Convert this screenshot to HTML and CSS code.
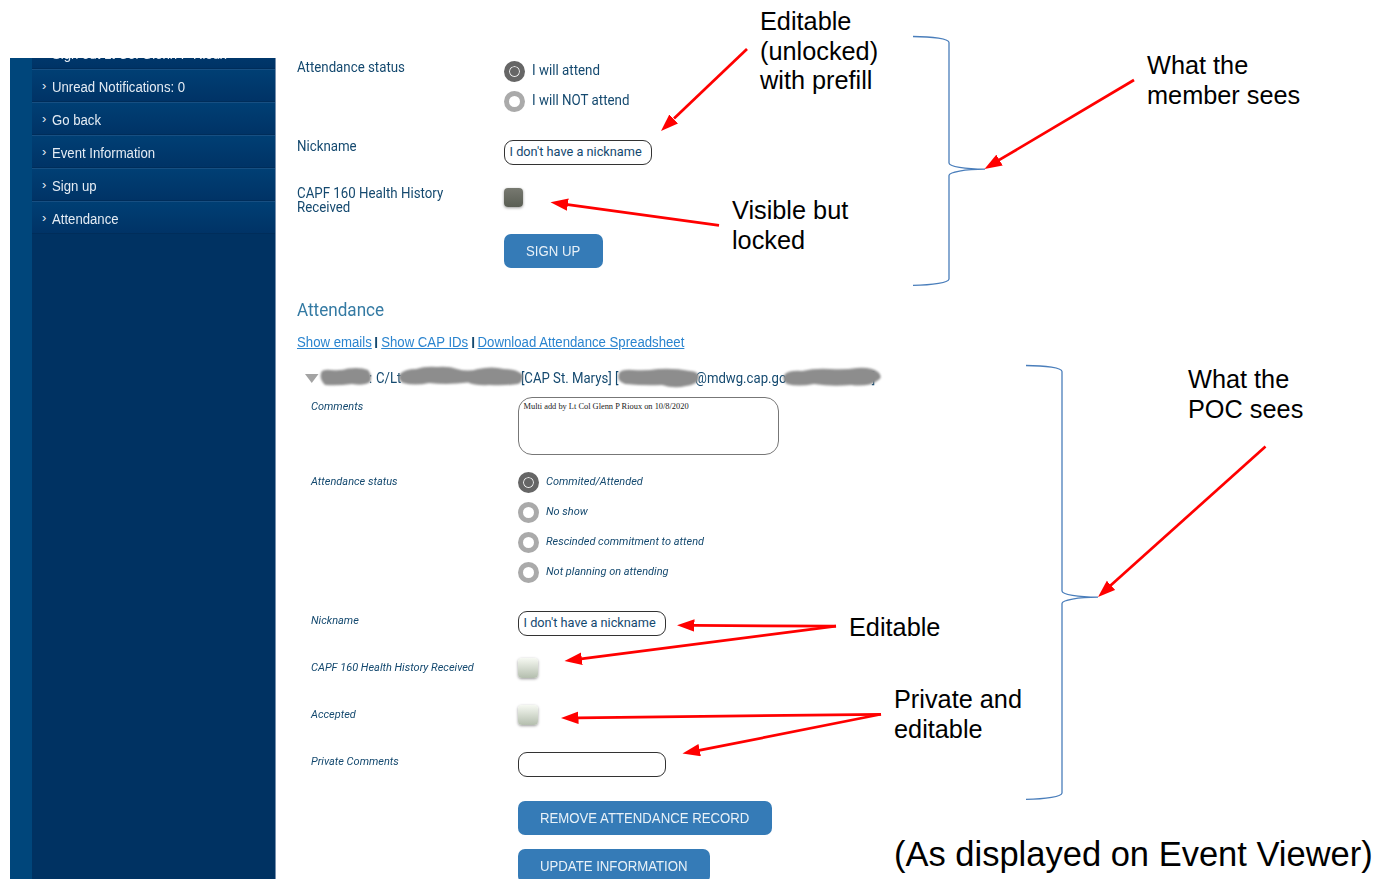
FILE: index.html
```html
<!DOCTYPE html>
<html lang="en">
<head>
<meta charset="utf-8">
<title>Event Viewer</title>
<link rel="stylesheet" href="styles.css">
</head>
<body>
<div class="slide">
  <div class="app">
    <aside class="sidebar">
      <nav class="nav">
        <a class="nav-item"><span class="chev">›</span><span class="nav-text">Sign out Lt Col Glenn P Rioux</span></a>
        <a class="nav-item"><span class="chev">›</span><span class="nav-text">Unread Notifications: 0</span></a>
        <a class="nav-item"><span class="chev">›</span><span class="nav-text">Go back</span></a>
        <a class="nav-item"><span class="chev">›</span><span class="nav-text">Event Information</span></a>
        <a class="nav-item"><span class="chev">›</span><span class="nav-text">Sign up</span></a>
        <a class="nav-item"><span class="chev">›</span><span class="nav-text">Attendance</span></a>
      </nav>
    </aside>
    <main class="main">
      <section class="signup">
        <div class="row tall"><div class="label">Attendance status</div>
          <div class="radios">
            <div class="option"><span class="radio on"></span><span class="otext">I will attend</span></div>
            <div class="option"><span class="radio"></span><span class="otext">I will NOT attend</span></div>
          </div>
        </div>
        <div class="row"><div class="label">Nickname</div><div class="field">I don't have a nickname</div></div>
        <div class="row"><div class="label">CAPF 160 Health History<br>Received</div><div class="check locked"></div></div>
        <div class="actions"><div class="button signup-btn"><span class="btext">SIGN UP</span></div></div>
      </section>
      <h2 class="heading">Attendance</h2>
      <div class="links"><a>Show emails</a><i class="bar"></i><a>Show CAP IDs</a><i class="bar"></i><a>Download Attendance Spreadsheet</a></div>
      <div class="member">
        <svg class="tri" width="14" height="9" viewBox="0 0 14 9"><path d="M0 0H13.500L6.750 9Z" fill="#a3a3a3"/></svg>
        <div class="mtext"><span class="m0">:</span><span class="m1">C/Lt</span><span class="m2">[CAP St. Marys] [</span><span class="m3">@mdwg.cap.go</span><span>]</span></div>
      </div>
      <section class="record">
        <div class="row comments"><div class="label">Comments</div><div class="area">Multi add by Lt Col Glenn P Rioux on 10/8/2020</div></div>
        <div class="row status"><div class="label">Attendance status</div>
          <div class="radios">
            <div class="option"><span class="radio on"></span><span class="otext">Commited/Attended</span></div>
            <div class="option"><span class="radio"></span><span class="otext">No show</span></div>
            <div class="option"><span class="radio"></span><span class="otext">Rescinded commitment to attend</span></div>
            <div class="option"><span class="radio"></span><span class="otext">Not planning on attending</span></div>
          </div>
        </div>
        <div class="row"><div class="label">Nickname</div><div class="field">I don't have a nickname</div></div>
        <div class="row"><div class="label">CAPF 160 Health History Received</div><div class="check"></div></div>
        <div class="row"><div class="label">Accepted</div><div class="check"></div></div>
        <div class="row last"><div class="label">Private Comments</div><div class="field"></div></div>
        <div class="actions"><div class="button remove-btn"><span class="btext">REMOVE ATTENDANCE RECORD</span></div><div class="button update-btn"><span class="btext">UPDATE INFORMATION</span></div></div>
      </section>
    </main>
  </div>

  <svg class="marks" width="1386" height="891" viewBox="0 0 1386 891">
    <defs>
      <marker id="head" markerUnits="userSpaceOnUse" markerWidth="18" markerHeight="13" refX="17.5" refY="6.25" orient="auto"><path d="M0 0L17.5 6.25L0 12.5Z" fill="#f00"/></marker>
      <filter id="soft"><feGaussianBlur stdDeviation="0.9"/></filter>
    </defs>
    <g fill="#8d8d8d" filter="url(#soft)">
      <path d="M321 373Q322 369 331 370Q342 371 348 368.500Q361 367 368 370Q373 376 370 382Q364 386 352 384Q338 386 325 385Q319 379 321 373Z"/>
      <path d="M400 374Q405 369 416 369Q425 366 437 367Q449 366 457 369Q468 372 478 369Q492 366 504 369Q517 369 523 375Q523 382 518 384Q504 386 489 385Q476 386 468 382.500Q448 385 429 383Q415 386 403 383Q397 379 400 374Z"/>
      <path d="M619 373Q622 369 633 370Q646 371 658 369Q675 368 690 371Q698 371 699 377Q698 385 686 386Q674 389 662 385Q645 386 625 384Q616 381 619 373Z"/>
      <path d="M785 374Q790 370 802 371Q815 368 830 369Q845 370 857 368Q871 367 878 372Q884 377 877 381Q869 387 851 385Q832 387 814 384Q798 387 787 384Q781 379 785 374Z"/>
    </g>
    <g fill="none" stroke="#4a7ebb" stroke-width="1.3">
      <path d="M913 36.500C933 36.500 949 39 949 42.500V163C949 166.500 965 169.200 985 169.200C965 169.200 949 172 949 175.500V279C949 282.500 933 285.300 913 285.300"/>
      <path d="M1026 365.500C1046 365.500 1062 368 1062 371.500V591C1062 594.500 1078 597.200 1098 597.200C1078 597.200 1062 600 1062 603.500V793C1062 796.500 1046 799.300 1026 799.300"/>
    </g>
    <g stroke="#f00" stroke-width="2.700">
      <path d="M747 49L674 118.500"/><path d="M719 225.300L566 204.400"/>
      <path d="M1134 80L998 160.700"/><path d="M1265.500 446.500L1110 586"/>
      <path d="M836 626.200L694 625.400"/><path d="M836 626.200L581 658.900"/>
      <path d="M881 714.300L578 717.800"/><path d="M881 714.300L699 750.400"/>
    </g>
    <g fill="none" stroke="none">
      <path d="M747 49L661 131" marker-end="url(#head)"/><path d="M719 225.300L550.500 202.300" marker-end="url(#head)"/>
      <path d="M1134 80L984.500 169" marker-end="url(#head)"/><path d="M1265.500 446.500L1098 597" marker-end="url(#head)"/>
      <path d="M836 626.200L677 625.300" marker-end="url(#head)"/><path d="M836 626.200L564.500 661" marker-end="url(#head)"/>
      <path d="M881 714.300L561 718" marker-end="url(#head)"/><path d="M881 714.300L682.500 753.600" marker-end="url(#head)"/>
    </g>
  </svg>
  <p class="note n1">Editable<br>(unlocked)<br>with prefill</p>
  <p class="note n2">Visible but<br>locked</p>
  <p class="note n3">What the<br>member sees</p>
  <p class="note n4">What the<br>POC sees</p>
  <p class="note n5">Editable</p>
  <p class="note n6">Private and<br>editable</p>
  <p class="note n7">(As displayed on Event Viewer)</p>
</div>
</body>
</html>
```
FILE: styles.css
```css
* { box-sizing: border-box; }
body { margin: 0; background: #fff; }
.slide { position: relative; width: 1386px; height: 891px; overflow: hidden; padding: 58px 0 0 10px; font-family: "Liberation Sans", Arial, sans-serif; }
.app { display: flex; width: 900px; height: 821px; overflow: hidden; }
.sidebar { width: 266px; flex: none; padding-left: 22px; background: #00467b; border-right: 1px solid #7890ae; overflow: hidden; }
.nav { height: 843px; margin-top: -22px; background: #003262; }
.nav-item { display: flex; height: 33px; padding: 1px 0 0 10px; line-height: 32px; font-size: 14px; color: #e4ecf4; white-space: nowrap; background: linear-gradient(#003f74, #003366); border-top: 1px solid #174f82; border-bottom: 1px solid #002d5a; }
.nav-text, .label, .otext, .btext, .links, .mtext, .heading { transform-origin: 0 50%; }
.nav-text { transform: scaleX(.94); }
.chev { width: 10.300px; line-height: 30px; font-size: 13px; }
.main { flex: 1; padding: 3px 0 0 21px; font-family: Roboto, sans-serif; color: #14496f; }
.row { display: grid; grid-template-columns: 207px 1fr; height: 47px; align-items: start; justify-items: start; }
.row.tall { height: 79px; }
.label { font-size: 14px; line-height: 14px; white-space: nowrap; transform: scaleX(.949); }
.signup .label { margin-top: -1px; }
.option { display: flex; align-items: center; height: 30px; gap: 7px; font-size: 14px; line-height: 19px; white-space: nowrap; }
.otext { transform: scaleX(.953); margin-top: -2px; }
.radios { margin-top: -5px; }
.radio { width: 21px; height: 21px; border: 5px solid #aaa; border-radius: 50%; background: #fff; margin-top: 1px; }
.radio.on { border-color: #666; background: #666; box-shadow: inset 0 0 0 1px #eee; }
.field { width: 148px; height: 25px; border: 1px solid #333; border-radius: 9px; padding-left: 4.500px; font-size: 12.750px; line-height: 22px; white-space: nowrap; }
.check { width: 20px; height: 20px; border-radius: 4px; background: linear-gradient(#f6f9f2, #b4beae); box-shadow: 0 1px 3px #0006; }
.check.locked { width: 19px; height: 19px; margin-top: 1px; background: linear-gradient(#777970, #5a5e54); }
.actions { display: flex; flex-direction: column; align-items: flex-start; gap: 14px; padding-left: 207px; }
.button { height: 34px; padding-left: 22px; border-radius: 7px; background: #357bb7; color: #e8f1f8; font: 14px/35px "Liberation Sans", Arial, sans-serif; white-space: nowrap; }
.btext { display: inline-block; transform: scaleX(.942); }
.signup-btn { width: 99px; }
.remove-btn { width: 254px; }
.update-btn { width: 192px; }
.heading { margin: 30px 0 0; font-size: 18px; line-height: 24px; font-weight: 400; color: #347aa3; transform: scaleX(.95); }
.links { display: flex; margin-top: 12px; font: 14px/16px "Liberation Sans", Arial, sans-serif; color: #2a84cf; white-space: nowrap; transform: scaleX(.942); }
.links a { text-decoration: underline; }
.bar { width: 2px; height: 11px; margin: 3px 4px; background: #14496f; }
.links { height: 16px; }
.member { display: flex; margin: 19px 0 0 8px; height: 18px; line-height: 18px; font-size: 14px; white-space: nowrap; }
.tri { flex: none; margin-top: 5px; margin-right: 50px; }
.mtext { display: flex; transform: scaleX(.94); }
.m0 { width: 7.400px; }
.m1 { width: 154.200px; }
.m2 { width: 185.300px; }
.m3 { width: 188px; }
.record { padding: 10px 0 0 14px; }
.record .row.comments { height: 75px; }
.record .row.status { height: 139px; }
.record .row.last { height: 49px; }
.record .label, .record .otext { font-size: 11.500px; font-style: italic; line-height: 18px; transform: scaleX(.955); }
.record .otext { margin-top: -2px; }
.area { width: 261px; height: 58px; border: 1px solid #777; border-radius: 14px; padding: 3px 4.500px; font: 8.400px/12px "Liberation Serif", serif; color: #222; white-space: nowrap; }
.marks { position: absolute; left: 0; top: 0; }
.note { position: absolute; margin: 0; font-size: 25.300px; line-height: 29.700px; color: #000; white-space: nowrap; }
.n1 { left: 760px; top: 7px; }
.n2 { left: 732px; top: 196px; }
.n3 { left: 1147px; top: 51px; }
.n4 { left: 1188px; top: 365px; }
.n5 { left: 849px; top: 613px; }
.n6 { left: 894px; top: 685px; }
.n7 { left: 894px; top: 833px; font-size: 34.500px; line-height: 42px; }
```
